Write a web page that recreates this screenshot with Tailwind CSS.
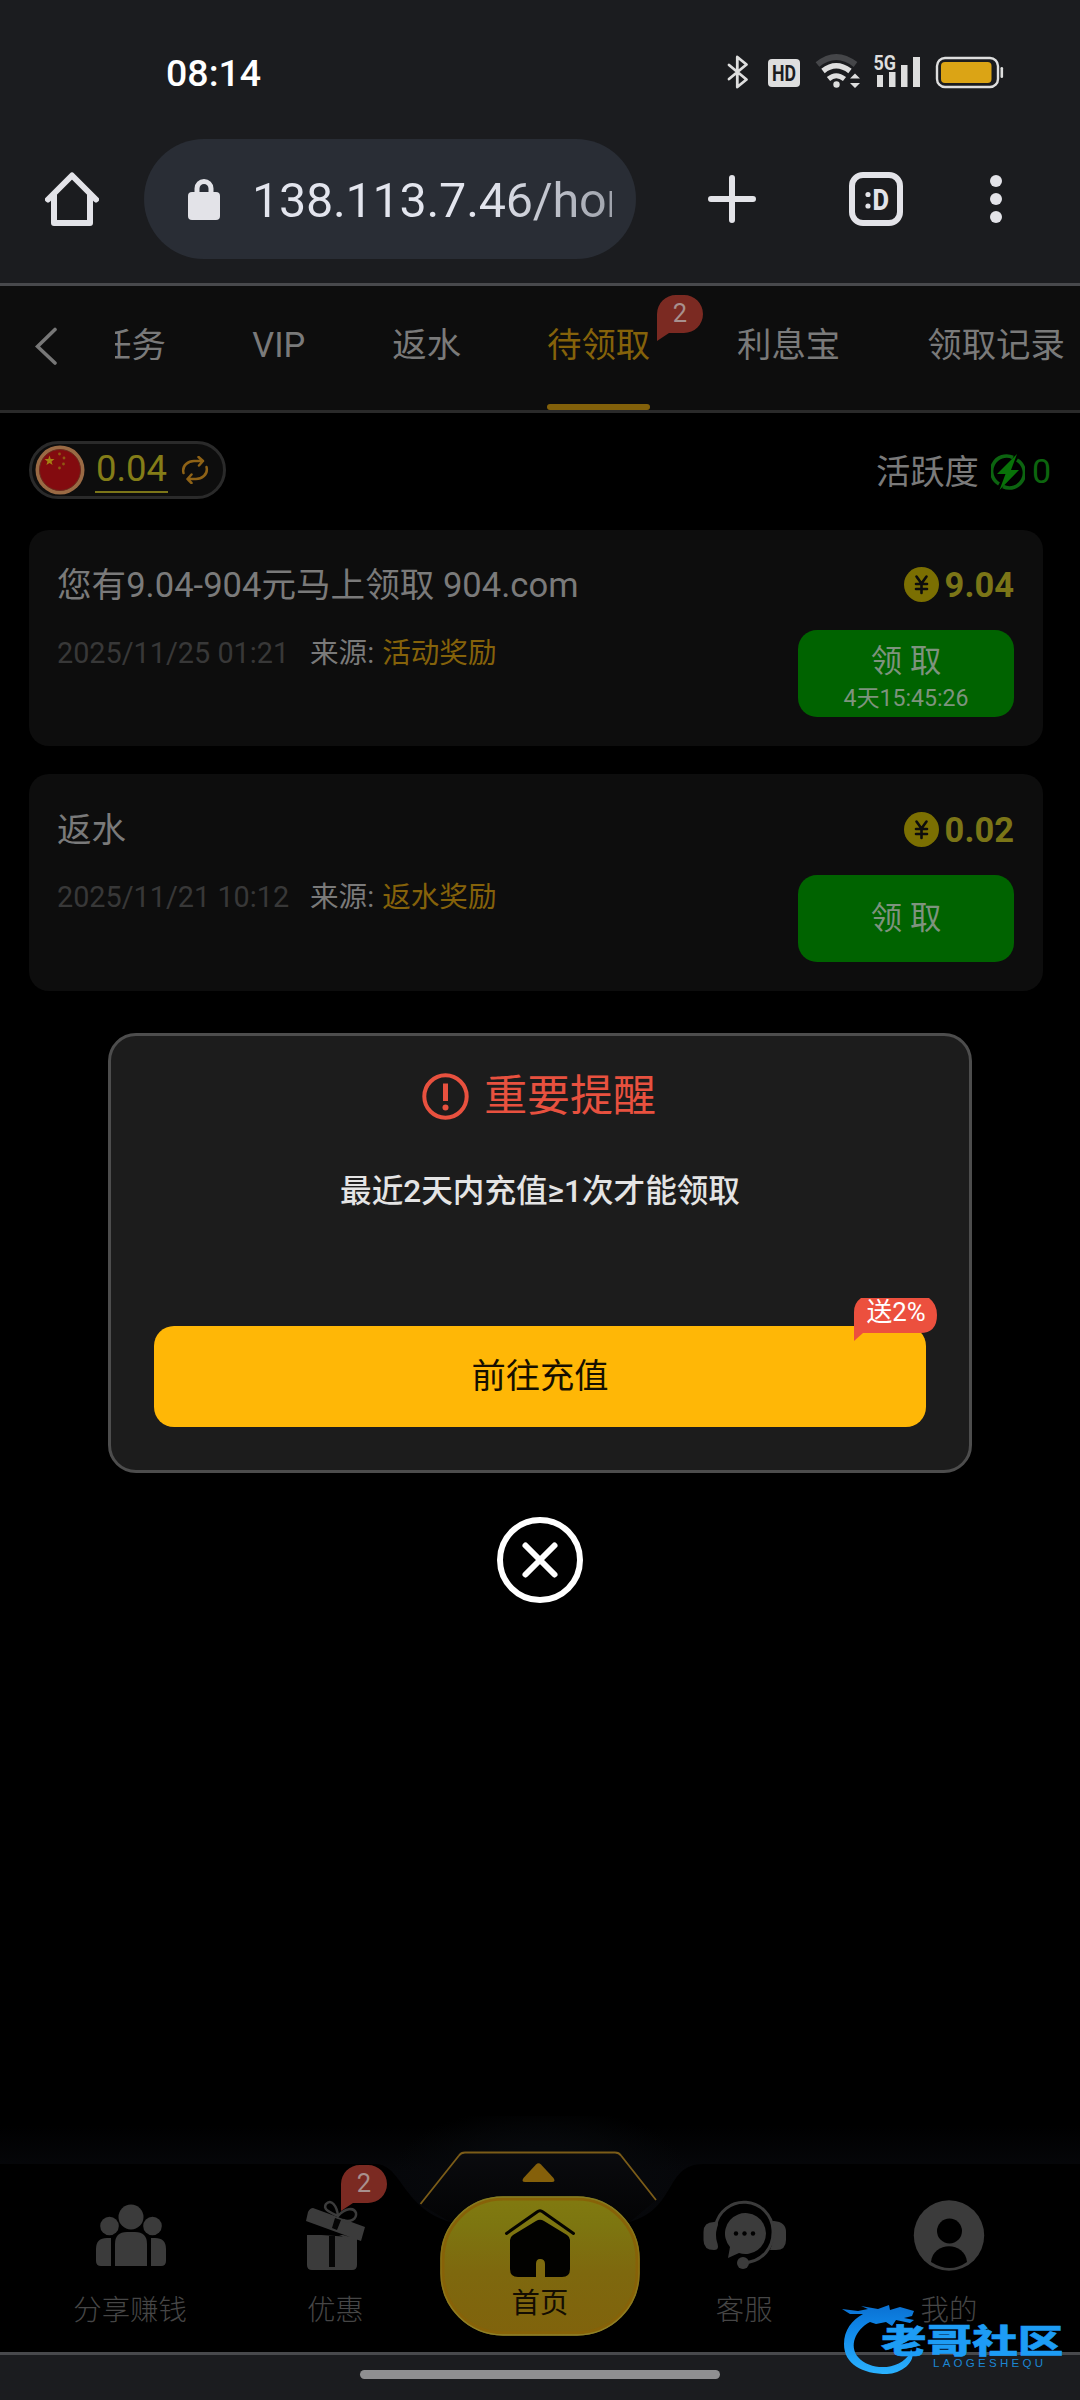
<!DOCTYPE html>
<html lang="zh-CN">
<head>
<meta charset="utf-8">
<title>待领取</title>
<script src="https://cdn.jsdelivr.net/npm/@tailwindcss/browser@4"></script>
</head>
<body class="bg-black">
<div class="relative flex h-[2400px] w-[1080px] flex-col overflow-hidden bg-black font-['Roboto','Noto_Sans_CJK_SC',sans-serif] text-[#7a7a7a]">

  <!-- Status bar -->
  <header class="flex h-[283px] shrink-0 flex-col bg-[#1b1c1f]">
    <div class="flex h-[139px] items-start justify-between pt-[50px] pr-[76px] pl-[166px]">
      <span class="text-[37.500px] leading-[46px] font-medium text-white">08:14</span>
      <svg class="h-[50px] w-[284px]" viewBox="720 50 284 50" fill="none">
        <path d="M729 65 746.500 79.500 737.300 87V57L746.500 64.500 729 79" stroke="#dedede" stroke-width="2.800" stroke-linejoin="round" stroke-linecap="round"/>
        <rect x="768" y="59" width="32" height="28" rx="4" fill="#dedede"/>
        <text x="784" y="81" text-anchor="middle" font-family="Roboto" font-weight="700" font-size="22.500" textLength="24" lengthAdjust="spacingAndGlyphs" fill="#1b1c1f">HD</text>
        <path d="M817.500 64.500Q836 49.500 855.500 64.500" stroke="#454649" stroke-width="6"/>
        <path d="M823 71Q836 60.500 850 71" stroke="#dedede" stroke-width="5.500"/>
        <path d="M828.500 79Q836 72.500 844.500 79" stroke="#dedede" stroke-width="5"/>
        <circle cx="836.500" cy="84.500" r="3.200" fill="#dedede"/>
        <path d="M850 78.500 855 73.500 860 78.500ZM850 83 855 88 860 83Z" fill="#dedede"/>
        <text x="873.500" y="70" font-family="Roboto" font-weight="700" font-size="20.500" textLength="22.500" lengthAdjust="spacingAndGlyphs" fill="#dedede">5G</text>
        <path d="M877 75h6v12h-6zM889 72h6.500v15H889zM901 65h6.500v22H901zM913 57h7v30h-7z" fill="#dedede"/>
        <rect x="937" y="58" width="61" height="29" rx="8" stroke="#dedede" stroke-width="2.400"/>
        <rect x="941" y="62" width="50.500" height="21" rx="4" fill="#dba415"/>
        <rect x="1000.500" y="67" width="2.600" height="11" rx="1.300" fill="#dedede"/>
      </svg>
    </div>
    <!-- Browser toolbar -->
    <div class="flex h-[120px] items-center">
      <svg class="ml-[45px] h-[54px] w-[54px]" viewBox="0 0 54 54" fill="none" stroke="#e3e3e8" stroke-width="6" stroke-linejoin="round" stroke-linecap="round"><path d="M3 27.500 27 3.500 51 27.500"/><path d="M9 23V51H45V23"/></svg>
      <div class="ml-[45px] flex h-[120px] w-[492px] items-center rounded-full bg-[#292d35] pl-[44px]">
        <svg class="h-[42px] w-[32px]" viewBox="0 0 32 42"><rect y="14" width="32" height="28" rx="4" fill="#e3e3e8"/><path d="M9 16V10.500a7 7 0 0 1 14 0V16" fill="none" stroke="#e3e3e8" stroke-width="5"/></svg>
        <div class="mt-[3px] ml-[32px] h-[60px] w-[360px] overflow-hidden bg-gradient-to-r from-[#e3e5ee] from-65% to-[#9fa3ac] bg-clip-text text-[48.500px] leading-[60px] tracking-[-0.250px] whitespace-nowrap text-transparent">138.113.7.46/home</div>
      </div>
      <svg class="ml-[72px] h-[48px] w-[48px]" viewBox="0 0 48 48" stroke="#e3e3e8" stroke-width="6" stroke-linecap="round"><path d="M24 3V45M3 24H45"/></svg>
      <div class="ml-[93px] flex h-[54px] w-[54px] items-center justify-center rounded-[14px] border-[6px] border-[#e3e3e8]">
        <svg class="h-[30px] w-[30px]" viewBox="0 0 30 30" fill="#e3e3e8"><circle cx="7" cy="10.500" r="2.600"/><circle cx="7" cy="22" r="2.600"/><text x="11.500" y="25.500" font-family="Roboto" font-weight="800" font-size="29" textLength="16.500" lengthAdjust="spacingAndGlyphs">D</text></svg>
      </div>
      <div class="ml-[87px] flex flex-col gap-[6px]"><i class="size-[12px] rounded-full bg-[#e3e3e8]"></i><i class="size-[12px] rounded-full bg-[#e3e3e8]"></i><i class="size-[12px] rounded-full bg-[#e3e3e8]"></i></div>
    </div>
  </header>

  <!-- Tabs -->
  <nav class="flex h-[130px] shrink-0 border-t-[3px] border-b-[3px] border-t-[#48494c] border-b-[#2a2a2a] bg-[#0d0d0d] text-[34.400px] leading-[118px]">
    <svg class="mt-[41px] ml-[35px] h-[38px] w-[22px]" viewBox="0 0 22 38" fill="none" stroke="#777" stroke-width="3.600" stroke-linecap="round"><path d="M20 2.500 2.500 19.500 20 36"/></svg>
    <div class="ml-[58px] flex w-[965px] overflow-hidden whitespace-nowrap">
      <span class="-ml-[18px]">任务</span>
      <span class="ml-[86.500px]">VIP</span>
      <span class="ml-[87px]">返水</span>
      <div class="relative ml-[86px] h-[124px] w-[103px] text-[#85620a]">待领取
        <i class="absolute bottom-0 left-0 h-[6px] w-[103px] rounded-full bg-[#82600a]"></i>
        <svg class="absolute top-[9px] left-[110px] h-[46px] w-[46px]" viewBox="0 0 46 46"><path d="M0 46V19A19 19 0 0 1 19 0H27A19 19 0 0 1 27 38H12Z" fill="#7b2a22"/><text x="23" y="26.500" text-anchor="middle" font-size="25.500" fill="#a8908e">2</text></svg>
      </div>
      <span class="ml-[87px]">利息宝</span>
      <span class="ml-[87px]">领取记录</span>
    </div>
  </nav>

  <main class="flex flex-1 flex-col px-[29px]">
    <div class="mt-[28px] flex h-[58px] items-center justify-between">
      <div class="flex h-[58px] w-[197px] items-center rounded-full border-[3px] border-[#2a2a2a] bg-[#0d0d0d] pl-[3px]">
        <svg class="size-[50px]" viewBox="0 0 50 50"><circle cx="25" cy="25" r="24.500" fill="#9a6a44"/><circle cx="25" cy="25" r="20.500" fill="#830b0f" stroke="#6b2a1c" stroke-width="1"/><path d="m14.500 10.500 1.200 3.600h3.800l-3 2.300 1.100 3.700-3.100-2.200-3.100 2.200 1.100-3.700-3-2.300h3.800z" fill="#a58012"/><g fill="#8f5a12"><circle cx="24.500" cy="9" r="1.400"/><circle cx="29" cy="13" r="1.400"/><circle cx="28.500" cy="19" r="1.400"/><circle cx="24.500" cy="23" r="1.400"/></g></svg>
        <span class="ml-[10px] h-[46px] w-[73px] border-b-2 border-[#7b7518] text-center text-[36.500px] leading-[44px] text-[#847d18]">0.04</span>
        <svg class="ml-[13px] size-[28px]" viewBox="0 0 28 28" fill="none" stroke="#8e6216" stroke-width="2.500" stroke-linecap="round" stroke-linejoin="round"><path d="M2.500 17C.5 9 8 5 13 5H22M17.500 1 22 5 18 9.500M25.500 11C27.500 19 20 23 15 23H6.500M10.500 18.500 6.500 23 10.500 27"/></svg>
      </div>
      <div class="flex items-center text-[34.300px] leading-[58px]"><span class="pt-[4px]">活跃度</span>
        <svg class="mt-[4px] ml-[12px] h-[36px] w-[34px]" viewBox="0 0 34 36"><path d="M22 3.500A15 15 0 0 0 8 30M12 32.500A15 15 0 0 0 26 6" fill="none" stroke="#0c6410" stroke-width="3.600"/><path d="M26 0 6 20H14.500L8.500 36 28 16H20Z" fill="#087208"/></svg>
        <span class="mt-[2px] ml-[7px] text-[34px] text-[#0c650e]">0</span></div>
    </div>

    <section class="mt-[31px] flex h-[216px] w-[1014px] justify-between rounded-[20px] bg-[#0d0d0d] pr-[29px] pl-[28px]">
      <div class="pt-[32px]">
        <div class="text-[34.600px] leading-[46px] whitespace-nowrap">您有9.04-904元马上领取 904.com</div>
        <div class="mt-[22px] flex text-[28.600px] leading-[46px]"><span class="w-[253px] text-[28.800px] text-[#383838]">2025/11/25 01:21</span><span>来源:</span><span class="ml-[8px] text-[#85620a]">活动奖励</span></div>
      </div>
      <div class="flex w-[216px] flex-col items-end pt-[36px]">
        <div class="flex h-[36px] items-center gap-[6px] text-[34.500px] leading-[36px] font-bold text-[#7b7517]">
          <svg class="size-[35px]" viewBox="0 0 35 35"><circle cx="17.500" cy="17.500" r="17.500" fill="#7b6f02"/><path d="m12.500 9.500 5 7 5-7M17.500 16.500V26M12 17H23M12 22H23" fill="none" stroke="#0d0d0d" stroke-width="2.600" stroke-linecap="round"/></svg><span class="pt-[2px]">9.04</span></div>
        <div class="mt-[28px] flex h-[87px] w-[216px] flex-col items-center rounded-[19px] bg-[#006300] text-[#7e937e]">
          <span class="mt-[11px] text-[31.400px] leading-[42px]">领 取</span><span class="text-[23.100px] leading-[31px]">4天15:45:26</span></div>
      </div>
    </section>

    <section class="mt-[28px] flex h-[217px] w-[1014px] justify-between rounded-[20px] bg-[#0d0d0d] pr-[29px] pl-[28px]">
      <div class="pt-[33px]">
        <div class="text-[34.600px] leading-[46px]">返水</div>
        <div class="mt-[21px] flex text-[28.600px] leading-[46px]"><span class="w-[253px] text-[28.800px] text-[#383838]">2025/11/21 10:12</span><span>来源:</span><span class="ml-[8px] text-[#85620a]">返水奖励</span></div>
      </div>
      <div class="flex w-[216px] flex-col items-end pt-[37px]">
        <div class="flex h-[36px] items-center gap-[6px] text-[34.500px] leading-[36px] font-bold text-[#7b7517]">
          <svg class="size-[35px]" viewBox="0 0 35 35"><circle cx="17.500" cy="17.500" r="17.500" fill="#7b6f02"/><path d="m12.500 9.500 5 7 5-7M17.500 16.500V26M12 17H23M12 22H23" fill="none" stroke="#0d0d0d" stroke-width="2.600" stroke-linecap="round"/></svg><span class="pt-[2px]">0.02</span></div>
        <div class="mt-[28px] flex h-[87px] w-[216px] items-center justify-center rounded-[19px] bg-[#006300] text-[31.400px] leading-[40px] text-[#7e937e]">领 取</div>
      </div>
    </section>
  </main>

  <!-- Bottom navigation -->
  <footer class="relative h-[236px] shrink-0">
    <svg class="absolute top-0 left-0 h-[236px] w-[1080px]" viewBox="0 2116 1080 236" fill="none">
      <defs>
        <linearGradient id="glow" x1="0" y1="2125" x2="0" y2="2170" gradientUnits="userSpaceOnUse"><stop stop-color="#000"/><stop offset="1" stop-color="#06070a"/></linearGradient>
        <radialGradient id="halo" cx="540" cy="2175" r="150" gradientTransform="matrix(1 0 0 .45 0 1196)" gradientUnits="userSpaceOnUse"><stop offset=".4" stop-color="#07090c"/><stop offset="1" stop-color="#07090c" stop-opacity="0"/></radialGradient>
        <linearGradient id="btn" x1="0" y1="2196" x2="0" y2="2336" gradientUnits="userSpaceOnUse"><stop stop-color="#817a10"/><stop offset=".2" stop-color="#7d7610"/><stop offset=".55" stop-color="#7e680e"/><stop offset="1" stop-color="#80630c"/></linearGradient>
        <linearGradient id="rim" x1="0" y1="2196" x2="0" y2="2336" gradientUnits="userSpaceOnUse"><stop stop-color="#857a20"/><stop offset=".5" stop-color="#8a6f10"/><stop offset="1" stop-color="#8e8128"/></linearGradient>
        <linearGradient id="panel" x1="0" y1="2153" x2="0" y2="2225" gradientUnits="userSpaceOnUse"><stop stop-color="#0a0b0e"/><stop offset="1" stop-color="#030304"/></linearGradient>
      </defs>
      <path d="M0 2116H1080V2240H0Z" fill="url(#glow)"/>
      <path d="M350 2116H730V2240H350Z" fill="url(#halo)"/>
      <path d="M420 2204 459 2156Q461 2153 465 2153H615Q619 2153 621 2156L656 2200 630 2222H450Z" fill="url(#panel)"/>
      <path d="M0 2164H375C402 2164 402 2208 450 2222H630C678 2208 664 2164 704 2164H1080V2352H0Z" fill="#000"/>
      <path d="M420.500 2204 459 2155.500Q461 2152.500 465 2152.500H615Q619 2152.500 621 2155.500L656 2200" stroke="#7b5c18" stroke-width="1.800"/>
      <path d="M536 2164.500Q538.500 2162 541 2164.500L553.500 2178Q556 2182 552 2182H525Q521 2182 523.500 2178Z" fill="#85600a"/>
      <rect x="440.500" y="2196.500" width="199" height="139" rx="62" fill="url(#btn)"/>
      <rect x="443" y="2199" width="194" height="134" rx="60" stroke="#876208" stroke-width="3"/>
      <rect x="441" y="2197" width="198" height="138" rx="62" stroke="url(#rim)" stroke-width="1.500"/>
    </svg>
    <div class="relative grid h-[236px] grid-cols-5 px-[27px] pt-[80px] text-center text-[28.400px] leading-[36px] font-light text-[#464646]">
      <div class="flex flex-col items-center">
        <svg class="h-[78px] w-[84px]" viewBox="-1 0 84 78" fill="#3b3b3b"><circle cx="42" cy="21" r="12.500"/><circle cx="20.500" cy="30" r="9.300"/><circle cx="63.500" cy="30" r="9.300"/><path d="M26 70V48q0-12 12-12h8q12 0 12 12v22zM22 70H12q-5 0-5-5V53q0-11 11-11h4zM62 70h10q5 0 5-5V53q0-11-11-11h-4z"/></svg>
        <span class="mt-[19px] pl-[1px]">分享赚钱</span>
      </div>
      <div class="relative flex flex-col items-center">
        <svg class="h-[78px] w-[84px]" viewBox="293 2196 84 78"><path d="M307 2235H343L357 2239V2265Q357 2270 352 2270H312Q307 2270 307 2265ZM313 2208 365 2227 361 2241 306 2221 308 2212Q310 2208 313 2208Z" fill="#3b3b3b"/><path d="M343 2236.500 307 2234 307 2223Z" fill="#000"/><path d="M329 2236h6v31h-6zM335 2218l6 2-4 10-5-2z" fill="#050505"/><path d="M338 2216C332 2213 322 2210 326 2204 331 2198 337 2206 338 2216C345 2208 354 2207 356 2213 357 2219 350 2223 343 2220" fill="none" stroke="#3b3b3b" stroke-width="2.500"/></svg>
        <span class="mt-[19px] pl-[1px]">优惠</span>
        <svg class="absolute -top-[31px] left-[109px] h-[46px] w-[47px]" viewBox="0 0 47 46"><path d="M0 46V19A19 19 0 0 1 19 0H27A19 19 0 0 1 27 38H12Z" fill="#7b2a22"/><text x="23" y="27" text-anchor="middle" font-size="25.500" font-weight="400" fill="#a8908e">2</text></svg>
      </div>
      <div class="flex flex-col items-center text-[#130d02]">
        <svg class="h-[83px] w-[84px]" viewBox="498 2196 84 83" fill="none"><path d="M506.500 2233.500 537 2212Q540 2209.500 543 2212L573.500 2233.500" stroke="#050400" stroke-width="3" stroke-linecap="round"/><path d="M510 2240Q510 2237 513 2235L536 2221Q540 2218.500 544 2221L567 2235Q570 2237 570 2240V2269Q570 2277 562 2277H545V2264Q545 2259 540 2259 536 2259 536 2264V2277H518Q510 2277 510 2269Z" fill="#020200"/></svg>
        <span class="mt-[7px] font-normal">首页</span>
      </div>
      <div class="flex flex-col items-center">
        <svg class="h-[78px] w-[84px]" viewBox="703 2196 84 78" fill="#3b3b3b"><path d="M714 2222Q720 2220 717 2228 715 2235 717 2242 720 2250 714 2250 703.500 2250 703.500 2240V2232Q703.500 2222 714 2222ZM774 2221Q786 2222 786 2232V2240Q786 2250 776 2250H770Q776 2236 772 2221Z"/><path d="M715.500 2226A29 29 0 0 1 773 2230C774 2247 763 2262 743 2263" fill="none" stroke="#3b3b3b" stroke-width="3"/><circle cx="743" cy="2263" r="6"/><path d="M728 2258 730 2247A20.500 20.500 0 1 1 739 2253Z"/><g fill="#000"><circle cx="736" cy="2233.500" r="2.200"/><circle cx="744.500" cy="2233.500" r="2.200"/><circle cx="753" cy="2233.500" r="2.200"/></g></svg>
        <span class="mt-[19px] pr-[2px]">客服</span>
      </div>
      <div class="flex flex-col items-center">
        <svg class="h-[78px] w-[84px]" viewBox="1 0 84 78"><circle cx="42" cy="39.500" r="35.200" fill="#3b3b3b"/><circle cx="42.500" cy="35" r="12.500" fill="#000"/><path d="M24 66C26 45 58 45 60 66Q43 78 24 66Z" fill="#000"/></svg>
        <span class="mt-[19px] pr-[3px]">我的</span>
      </div>
    </div>
  </footer>
  <div class="flex h-[48px] shrink-0 justify-center border-t-[3px] border-[#48494c] bg-[#1b1c1f] pt-[15px]"><i class="h-[9px] w-[360px] rounded-full bg-[#8f8f91]"></i></div>

  <!-- Reminder dialog -->
  <div class="absolute inset-x-0 top-[1033px] flex flex-col items-center">
    <div class="flex h-[440px] w-[864px] flex-col items-center rounded-[28px] border-[3px] border-[#4d4d4d] bg-[#1c1c1c]">
      <div class="mt-[33px] flex h-[54px] items-center gap-[15px] pr-[2px] text-[42.900px] leading-[54px] text-[#e8513f]">
        <svg class="size-[47px]" viewBox="0 0 47 47" fill="none" stroke="#e8513f"><circle cx="23.500" cy="23.500" r="21.200" stroke-width="4"/><path d="M23.500 10.500V28" stroke-width="5"/><circle cx="23.500" cy="34.500" r="3" fill="#e8513f" stroke="none"/></svg><span>重要提醒</span></div>
      <div class="mt-[42px] text-[31.600px] leading-[54px] font-medium text-[#e4e4e4]">最近2天内充值≥1次才能领取</div>
      <div class="relative mt-[107px] flex h-[101px] w-[772px] items-center justify-center rounded-[20px] bg-[#ffb706] text-[34.300px] text-[#160f00]">前往充值
        <svg class="absolute -top-[28px] left-[700px] h-[44px] w-[84px]" viewBox="0 0 84 44"><path d="M0 43V14Q0 5 7 0H75Q83 6 83 17 83 35 66 35H9Z" fill="#ec503e"/><text x="42" y="23" text-anchor="middle" font-size="25.800" fill="#fff">送2%</text></svg>
      </div>
    </div>
    <svg class="mt-[44px] size-[86px]" viewBox="0 0 86 86" fill="none" stroke="#fff" stroke-width="6" stroke-linecap="round"><circle cx="43" cy="43" r="40"/><path d="M28.500 28.500 57.500 57.500M57.500 28.500 28.500 57.500"/></svg>
  </div>

  <!-- Community mark -->
  <svg class="absolute top-[2300px] left-[840px] h-[80px] w-[230px]" viewBox="840 2300 230 80">
    <defs><linearGradient id="blue" x1="0" y1="2303" x2="0" y2="2374" gradientUnits="userSpaceOnUse"><stop stop-color="#0a6fd0"/><stop offset=".35" stop-color="#0f86e8"/><stop offset="1" stop-color="#2bb2ff"/></linearGradient></defs>
    <path d="M842 2309 858 2311 868 2309 861 2306 878 2309 889 2305 890 2310 900 2307 914 2311 912 2316 904 2318 914 2320 910 2323 896 2320 892 2326 886 2322 876 2324 870 2322C855 2330 849 2346 858 2357 871 2372 901 2370 910 2353L911 2349C918 2362 900 2374 887 2374 862 2374 844 2364 844 2344 844 2330 852 2320 863 2314L850 2314Z" fill="url(#blue)"/>
    <g transform="translate(881 2353) scale(1.140 .82)"><text font-family="Noto Sans CJK SC" font-weight="900" font-size="40" fill="#1d9cf5" stroke="#1d9cf5" stroke-width=".6">老哥社区</text></g>
    <text x="933" y="2367" font-family="Liberation Sans" font-size="11.500" textLength="110" fill="#1c86d2">LAOGESHEQU</text>
  </svg>
</div>
</body>
</html>
